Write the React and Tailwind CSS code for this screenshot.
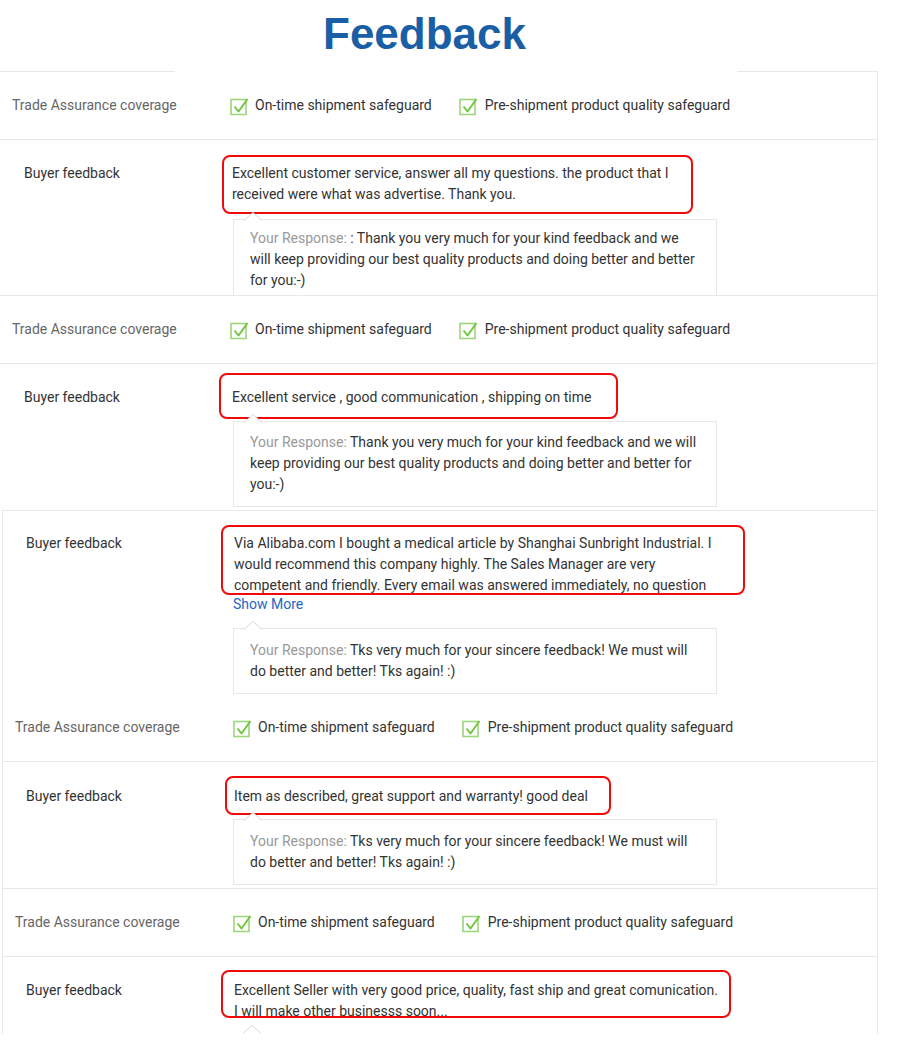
import React from "react";

const font = { fontFamily: "Roboto, 'Liberation Sans', sans-serif" };

// green check-in-a-box used on the trade assurance rows
function CheckBox() {
  return (
    <svg width="20" height="20" viewBox="0 0 20 20" className="shrink-0">
      <rect x="1" y="3.5" width="15" height="15" fill="none" stroke="#9ed67c" strokeWidth="1.6" />
      <path d="M4.5 10.5 L8.5 15.5 L17.5 3" fill="none" stroke="#74c540" strokeWidth="2" strokeLinejoin="round" />
    </svg>
  );
}

function Lines({ lines }) {
  return lines.map((l, i) => (
    <span key={i} className="block whitespace-nowrap">
      {l}
    </span>
  ));
}

function TradeRow({ labelPl = "pl-[12px]" }) {
  return (
    <div className="h-[68px] flex items-center border-b border-[#e8e8e8] text-[14px]">
      <div className={`${labelPl} w-[230px] shrink-0 text-[#666]`}>Trade Assurance coverage</div>
      <div className="flex items-center text-[#333]">
        <CheckBox />
        <span className="ml-[5px]">On-time shipment safeguard</span>
        <span className="ml-[27px]">
          <CheckBox />
        </span>
        <span className="ml-[6px]">Pre-shipment product quality safeguard</span>
      </div>
    </div>
  );
}

function Notch() {
  return (
    <svg width="18" height="9" viewBox="0 0 18 9" className="absolute left-[10px] -top-[8px]">
      <path d="M0 8.5 L9 0.5 L18 8.5" fill="#fff" stroke="#d8d8d8" strokeWidth="1" />
    </svg>
  );
}

function Response({ lines, className = "" }) {
  return (
    <div className={`relative w-[484px] border border-[#e8e8e8] pl-[16px] text-[14px] leading-[21px] text-[#333] ${className}`}>
      <Notch />
      {lines.map((l, i) => (
        <span key={i} className="block whitespace-nowrap">
          {i === 0 && <span className="text-[#999]">Your Response: </span>}
          {l}
        </span>
      ))}
    </div>
  );
}

const label = "text-[14px] leading-[21px] text-[#333]";
const redBox = "border-2 border-[#f00a0a] rounded-[8px] text-[14px] leading-[21px] text-[#333]";

export default function App() {
  return (
    <div className="w-[900px] bg-white" style={font}>
      {/* TITLE */}
      <div className="h-[71px] pl-[323px] pt-[8px]">
        <h1 className="text-[44px] leading-[52px] font-bold text-[#1a5ea6]" style={{ fontFamily: "'Liberation Sans', Arial, sans-serif" }}>
          Feedback
        </h1>
      </div>

      <div className="w-[878px] border-r border-[#e8e8e8]">
        {/* SECTION 1 */}
        <div className="flex h-px">
          <div className="w-[175px] bg-[#e8e8e8]" />
          <div className="w-[562px]" />
          <div className="flex-1 bg-[#e8e8e8]" />
        </div>
        <TradeRow />
        <div className="flex pt-[15px] h-[155px]">
          <div className={`w-[222px] shrink-0 pl-[24px] pt-[8px] ${label}`}>Buyer feedback</div>
          <div>
            <div className={`w-[471px] pl-[8px] pt-[6px] pb-[7px] ${redBox}`}>
              <Lines lines={["Excellent customer service, answer all my questions. the product that I", "received were what was advertise. Thank you."]} />
            </div>
            <Response
              className="ml-[11px] mt-[5px] pt-[8px] border-b-0 pb-[4px]"
              lines={[
                ": Thank you very much for your kind feedback and we",
                "will keep providing our best quality products and doing better and better",
                "for you:-)",
              ]}
            />
          </div>
        </div>

        {/* SECTION 2 */}
        <div className="border-t border-[#e8e8e8]">
          <TradeRow />
          <div className="flex pt-[9px] pb-[3px]">
            <div className={`w-[219px] shrink-0 pl-[24px] pt-[14px] ${label}`}>Buyer feedback</div>
            <div>
              <div className={`w-[399px] pl-[11px] pt-[12px] pb-[9px] ${redBox}`}>
                Excellent service , good communication , shipping on time
              </div>
              <Response
                className="ml-[14px] mt-[2px] pt-[10px] pb-[11px]"
                lines={[
                  "Thank you very much for your kind feedback and we will",
                  "keep providing our best quality products and doing better and better for",
                  "you:-)",
                ]}
              />
            </div>
          </div>
        </div>

        {/* SECTION 3 */}
        <div className="ml-[2px] border-t border-l border-[#e8e8e8]">
          <div className="flex pt-[14px]">
            <div className={`w-[218px] shrink-0 pl-[23px] pt-[8px] ${label}`}>Buyer feedback</div>
            <div>
              <div className={`w-[524px] h-[70px] overflow-hidden pl-[11px] pt-[6px] ${redBox}`}>
                <Lines
                  lines={[
                    "Via Alibaba.com I bought a medical article by Shanghai Sunbright Industrial. I",
                    "would recommend this company highly. The Sales Manager are very",
                    "competent and friendly. Every email was answered immediately, no question",
                  ]}
                />
              </div>
              <div className="ml-[12px] text-[14px] leading-[18px] text-[#1f66c7]">Show More</div>
              <Response
                className="ml-[12px] mt-[15px] pt-[11px] pb-[11px]"
                lines={["Tks very much for your sincere feedback! We must will", "do better and better! Tks again! :)"]}
              />
            </div>
          </div>
          <TradeRow />
          <div className="flex pt-[14px] pb-[3px]">
            <div className={`w-[222px] shrink-0 pl-[23px] pt-[10px] ${label}`}>Buyer feedback</div>
            <div>
              <div className={`w-[386px] pl-[7px] pt-[8px] pb-[6px] ${redBox}`}>
                Item as described, great support and warranty! good deal
              </div>
              <Response
                className="ml-[8px] mt-[4px] pt-[11px] pb-[11px]"
                lines={["Tks very much for your sincere feedback! We must will", "do better and better! Tks again! :)"]}
              />
            </div>
          </div>
        </div>

        {/* SECTION 4 */}
        <div className="ml-[2px] border-t border-l border-[#e8e8e8]">
          <TradeRow />
          <div className="flex pt-[13px] h-[77px]">
            <div className={`w-[218px] shrink-0 pl-[23px] pt-[10px] ${label}`}>Buyer feedback</div>
            <div>
              <div className={`w-[510px] h-[48px] overflow-hidden pl-[11px] pt-[8px] ${redBox}`}>
                <Lines lines={["Excellent Seller with very good price, quality, fast ship and great comunication.", "I will make other businesss soon..."]} />
              </div>
              <div className="relative ml-[12px] mt-[15px]">
                <Notch />
              </div>
            </div>
          </div>
        </div>
      </div>
    </div>
  );
}
